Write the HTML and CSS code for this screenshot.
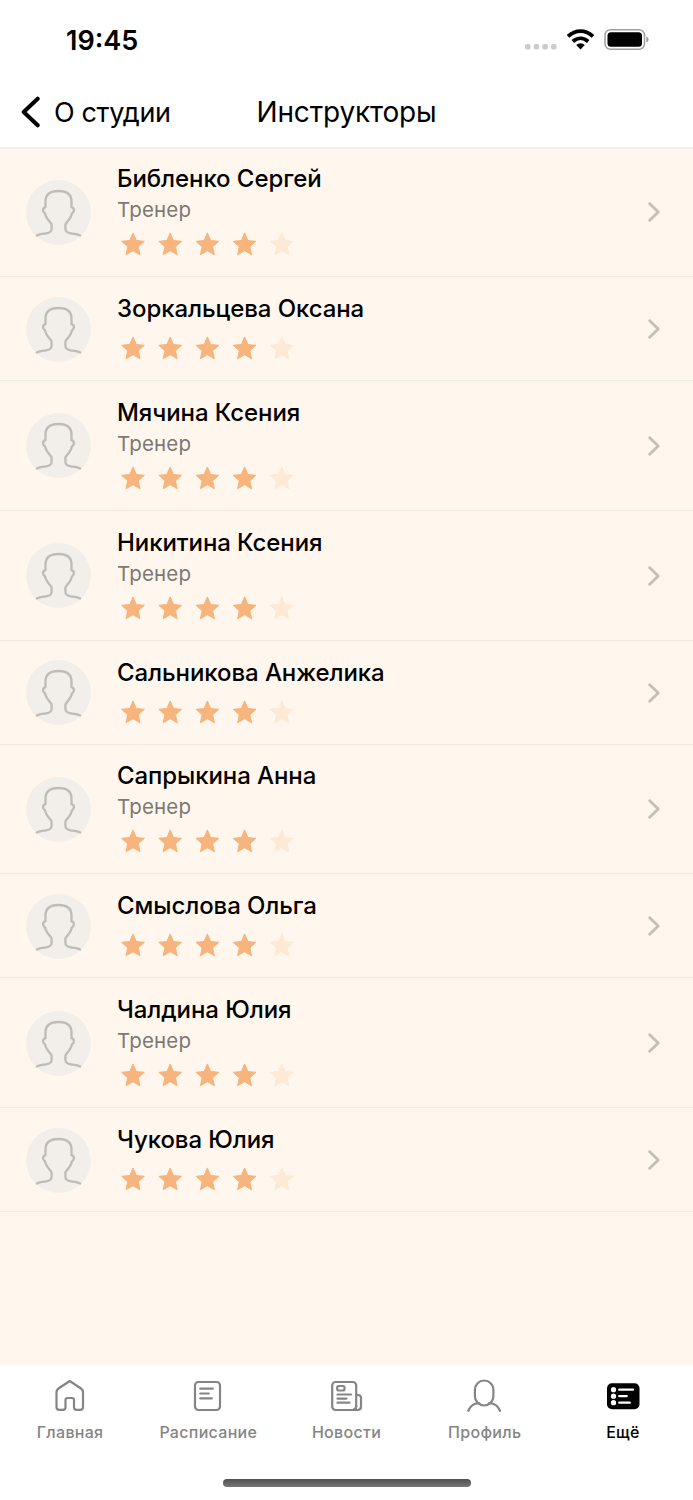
FILE: index.html
```html
<!DOCTYPE html>
<html lang="ru">
<head>
  <meta charset="UTF-8">
  <title>Инструкторы</title>
  <link rel="stylesheet" href="styles.css">
</head>
<body>
  <!-- Shared icons -->
  <svg class="sprite">
    <symbol id="person" viewBox="0 0 65 65">
      <circle cx="32.500" cy="32.500" r="32.400" fill="#f2eee9"/>
      <path d="M10.800 55.500C14 53.700 17 53.900 20 53.400C24 52.800 25.600 51.800 25.600 48.500V44.500C25.200 42.500 19.800 38.500 19.300 33.800C18.500 33 16.800 31.500 17 30C17.200 28.200 18.300 27.500 19.500 27.200V21.500C19.500 13.500 25 11 32.500 11S45.500 13.500 45.500 21.500V27.200C46.700 27.500 47.800 28.200 48 30C48.200 31.500 46.500 33 45.700 33.800C45.200 38.500 39.800 42.500 39.400 44.500V48.500C39.400 51.800 41 52.800 45 53.400C48 53.900 51 53.700 54.200 55.500" fill="none" stroke="#bfbcb7" stroke-width="2.300" stroke-linecap="round" stroke-linejoin="round"/>
    </symbol>
    <symbol id="star" viewBox="0 0 24 24">
      <path d="M12 .9 15.300 8.500 23.400 9.300 17.300 14.800 19 22.800 12 18.700 5 22.800 6.700 14.800 .6 9.300 8.700 8.500Z" stroke="currentColor" stroke-width="1" stroke-linejoin="round" fill="currentColor"/>
    </symbol>
    <symbol id="stars" viewBox="0 0 173 24">
      <g color="#f7b47d">
        <use href="#star" x="0" width="24" height="24"/>
        <use href="#star" x="37.200" width="24" height="24"/>
        <use href="#star" x="74.400" width="24" height="24"/>
        <use href="#star" x="111.600" width="24" height="24"/>
      </g>
      <use href="#star" x="148.800" width="24" height="24" color="#fde9d5"/>
    </symbol>
    <symbol id="arrow" viewBox="0 0 14 22">
      <path d="M2.700 2.800 11.200 11 2.700 19.200" fill="none" stroke="#c4bfb8" stroke-width="2.900" stroke-linecap="round" stroke-linejoin="round"/>
    </symbol>
  </svg>

  <div class="screen">
    <header class="header">
      <div class="status-bar">
        <span class="time">19:45</span>
        <svg class="status-icons" width="126" height="24" viewBox="0 0 126 24">
          <g fill="#cbcbcb">
            <rect x="1" y="16" width="5.600" height="5.600" rx="2"/>
            <rect x="9.700" y="16" width="5.600" height="5.600" rx="2"/>
            <rect x="18.300" y="16" width="5.600" height="5.600" rx="2"/>
            <rect x="27" y="16" width="5.600" height="5.600" rx="2"/>
          </g>
          <g fill="none" stroke="#000" stroke-width="3.700">
            <path d="M44 8.400C51.500 1.300 61.500 1.300 69 8.400"/>
            <path d="M48.800 13.500C53.500 9.400 59.500 9.400 64.200 13.500"/>
          </g>
          <path d="M56.500 21.400 52.200 17.100Q56.500 13.600 60.800 17.100Z"/>
          <rect x="81" y="1.700" width="39.500" height="19.600" rx="5.500" fill="none" stroke="#a0a0a0" stroke-width="1.500"/>
          <rect x="83.500" y="4.200" width="34.500" height="14.600" rx="3.500"/>
          <path d="M122.300 8.500Q124.600 9.500 124.600 11.500T122.300 14.500Z" fill="#999"/>
        </svg>
      </div>
      <div class="nav-bar">
        <a class="back">
          <svg width="20" height="32" viewBox="0 0 20 32"><path d="M17.700 2.700 3.700 16 17.700 29.300" fill="none" stroke="#000" stroke-width="4" stroke-linecap="round" stroke-linejoin="round"/></svg>
          <span>О студии</span>
        </a>
        <h1>Инструкторы</h1>
      </div>
    </header>

    <main class="list">
      <div class="row">
        <svg class="avatar"><use href="#person"/></svg>
        <div class="info">
          <div class="name">Библенко Сергей</div>
          <div class="role">Тренер</div>
          <svg class="rating"><use href="#stars"/></svg>
        </div>
        <svg class="arrow"><use href="#arrow"/></svg>
      </div>
      <div class="row short">
        <svg class="avatar"><use href="#person"/></svg>
        <div class="info">
          <div class="name">Зоркальцева Оксана</div>
          <svg class="rating"><use href="#stars"/></svg>
        </div>
        <svg class="arrow"><use href="#arrow"/></svg>
      </div>
      <div class="row">
        <svg class="avatar"><use href="#person"/></svg>
        <div class="info">
          <div class="name">Мячина Ксения</div>
          <div class="role">Тренер</div>
          <svg class="rating"><use href="#stars"/></svg>
        </div>
        <svg class="arrow"><use href="#arrow"/></svg>
      </div>
      <div class="row">
        <svg class="avatar"><use href="#person"/></svg>
        <div class="info">
          <div class="name">Никитина Ксения</div>
          <div class="role">Тренер</div>
          <svg class="rating"><use href="#stars"/></svg>
        </div>
        <svg class="arrow"><use href="#arrow"/></svg>
      </div>
      <div class="row short">
        <svg class="avatar"><use href="#person"/></svg>
        <div class="info">
          <div class="name">Сальникова Анжелика</div>
          <svg class="rating"><use href="#stars"/></svg>
        </div>
        <svg class="arrow"><use href="#arrow"/></svg>
      </div>
      <div class="row">
        <svg class="avatar"><use href="#person"/></svg>
        <div class="info">
          <div class="name">Сапрыкина Анна</div>
          <div class="role">Тренер</div>
          <svg class="rating"><use href="#stars"/></svg>
        </div>
        <svg class="arrow"><use href="#arrow"/></svg>
      </div>
      <div class="row short">
        <svg class="avatar"><use href="#person"/></svg>
        <div class="info">
          <div class="name">Смыслова Ольга</div>
          <svg class="rating"><use href="#stars"/></svg>
        </div>
        <svg class="arrow"><use href="#arrow"/></svg>
      </div>
      <div class="row">
        <svg class="avatar"><use href="#person"/></svg>
        <div class="info">
          <div class="name">Чалдина Юлия</div>
          <div class="role">Тренер</div>
          <svg class="rating"><use href="#stars"/></svg>
        </div>
        <svg class="arrow"><use href="#arrow"/></svg>
      </div>
      <div class="row short">
        <svg class="avatar"><use href="#person"/></svg>
        <div class="info">
          <div class="name">Чукова Юлия</div>
          <svg class="rating"><use href="#stars"/></svg>
        </div>
        <svg class="arrow"><use href="#arrow"/></svg>
      </div>
    </main>

    <footer class="footer">
      <nav class="tabs">
        <a class="tab">
          <svg width="36" height="36" viewBox="0 0 36 36"><path d="M4.500 14.500Q4.500 12 6.500 10.500L17.700 3 29 10.500Q31 12 31 14.500V29Q31 31.800 28.200 31.800H24.500Q22 31.800 22 29.300V22Q22 20 20 20H15.500Q13.500 20 13.500 22V29.300Q13.500 31.800 11 31.800H7.300Q4.500 31.800 4.500 29Z"/></svg>
          <span>Главная</span>
        </a>
        <a class="tab">
          <svg width="36" height="36" viewBox="0 0 36 36"><rect x="5" y="4" width="25" height="28" rx="3.500"/><path d="M10.300 10.700H22.800M10.300 15.500H18.800M10.300 20.400H21.800"/></svg>
          <span>Расписание</span>
        </a>
        <a class="tab">
          <svg width="36" height="36" viewBox="0 0 36 36"><rect x="4.200" y="4" width="24" height="28" rx="3.500"/><rect x="9.200" y="8" width="7.300" height="4.500" rx="1.500"/><path d="M9.500 16.500H23M9.500 20.600H18.500M9.500 24.700H21.500M28.200 17H30Q33 17 33 20V28.500Q33 32 29.500 32H24.500Q28.200 31.500 28.200 28"/></svg>
          <span>Новости</span>
        </a>
        <a class="tab">
          <svg width="36" height="36" viewBox="0 0 36 36"><rect x="7.900" y="2.500" width="18.500" height="25" rx="9.250"/><path d="M1.300 32.800C4 26.500 8 25 12.500 25.300M33 32.800C30.300 26.500 26.300 25 21.800 25.300"/></svg>
          <span>Профиль</span>
        </a>
        <a class="tab active">
          <svg width="36" height="36" viewBox="0 0 36 36"><rect x="2" y="5.200" width="32.500" height="26" rx="5" fill="#000" stroke="none"/><g fill="#fff" stroke="none"><circle cx="8.500" cy="11.700" r="2.600"/><circle cx="8.500" cy="18.200" r="2.600"/><circle cx="8.500" cy="24.700" r="2.600"/></g><path d="M14.200 11.700H28M14.200 18.200H21.700M14.200 24.700H24.800" stroke="#fff"/></svg>
          <span>Ещё</span>
        </a>
      </nav>
      <div class="home-bar"></div>
    </footer>
  </div>
</body>
</html>
```
FILE: styles.css
```css
* {
  box-sizing: border-box;
}

body {
  margin: 0;
  font-family: Inter, "Noto Sans", sans-serif;
  color: #000;
  background: #fff7ed;
}

.sprite {
  display: none;
}

svg {
  display: block;
  flex-shrink: 0;
}

.screen {
  display: flex;
  flex-direction: column;
  height: 1500px;
}

.header {
  height: 149px;
  background: #fff;
  border-bottom: 2px solid #f1eeec;
}

.status-bar {
  display: flex;
  justify-content: space-between;
  align-items: center;
  height: 78px;
  padding: 0 43px 0 66px;
}

.time {
  font-size: 27px;
  font-weight: 600;
  padding-top: 2px;
}

.status-icons {
  margin-top: 2px;
}

.nav-bar {
  display: grid;
  grid-template-columns: 1fr auto 1fr;
  align-items: center;
  height: 68px;
}

.back {
  display: flex;
  align-items: center;
  gap: 14px;
  padding-left: 20px;
  font-size: 27px;
  letter-spacing: -0.350px;
}

h1 {
  margin: 0;
  font-size: 28px;
  font-weight: 400;
  letter-spacing: -0.150px;
}

.list {
  flex: 1;
  margin-top: -1.750px;
}

.row {
  display: flex;
  align-items: center;
  height: 129.750px;
  padding: 1px 32px 0 26px;
  border-bottom: 1.500px solid #eeebe3;
}

.row.short {
  height: 104px;
}

.avatar {
  width: 65px;
  height: 65px;
}

.info {
  flex: 1;
  margin-left: 26px;
  padding-bottom: 5px;
}

.name {
  font-size: 24px;
  font-weight: 500;
  line-height: 32px;
  letter-spacing: -0.080px;
}

.role {
  font-size: 20.500px;
  line-height: 29px;
  letter-spacing: 0.150px;
  color: #7c7974;
}

.rating {
  width: 173px;
  height: 24px;
  margin: 8px 0 0 4px;
}

.short .rating {
  margin-top: 11px;
}

.arrow {
  width: 14px;
  height: 22px;
}

.footer {
  height: 135px;
  background: #fff;
}

.tabs {
  display: grid;
  grid-template-columns: repeat(5, 1fr);
  height: 114px;
  padding: 13px 1px 0;
}

.tab {
  display: flex;
  flex-direction: column;
  align-items: center;
  gap: 7px;
  font-size: 16px;
  font-weight: 500;
  line-height: 22px;
  letter-spacing: 0.3px;
  color: #858585;
}

.tab svg {
  fill: none;
  stroke: #858585;
  stroke-width: 2.2;
  stroke-linecap: round;
  stroke-linejoin: round;
}

.tab.active {
  color: #000;
}

.home-bar {
  width: 248px;
  height: 8px;
  margin: 0 auto;
  border-radius: 4px;
  background: linear-gradient(#505050, #777);
}
```
